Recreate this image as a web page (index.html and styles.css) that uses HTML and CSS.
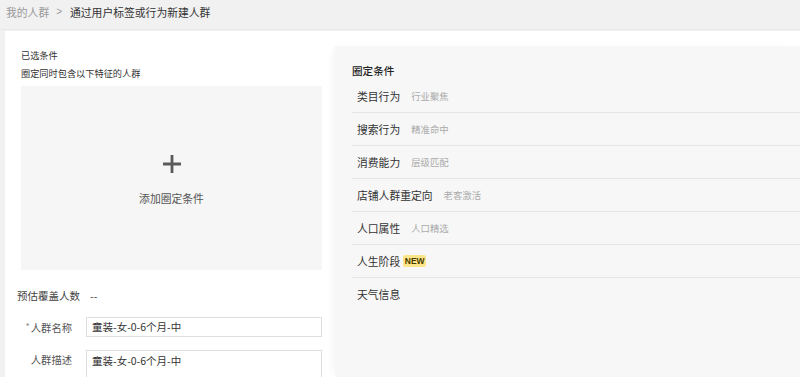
FILE: index.html
```html
<!DOCTYPE html>
<html lang="zh-CN">
<head>
<meta charset="utf-8">
<title>通过用户标签或行为新建人群</title>
<link rel="stylesheet" href="styles.css">
</head>
<body>
<div class="crumbs">
  <span class="crumb-link">我的人群</span>
  <span class="crumb-sep">&gt;</span>
  <span class="crumb-cur">通过用户标签或行为新建人群</span>
</div>
<div class="card">
  <div class="left">
    <div class="sel-title">已选条件</div>
    <div class="sel-sub">圈定同时包含以下特征的人群</div>
    <div class="drop">
      <svg class="plus" width="18" height="18" viewBox="0 0 18 18"><path d="M9 0v18M0 9h18" stroke="#5a5a5a" stroke-width="2.8" fill="none"/></svg>
      <div class="drop-text">添加圈定条件</div>
    </div>
    <div class="estimate">
      <span class="est-label">预估覆盖人数</span>
      <span class="est-val">--</span>
    </div>
    <div class="field">
      <label class="f-label"><span class="req">*</span>人群名称</label>
      <div class="input">童装-女-0-6个月-中</div>
    </div>
    <div class="field">
      <label class="f-label">人群描述</label>
      <div class="input textarea">童装-女-0-6个月-中</div>
    </div>
  </div>
  <div class="panel">
    <div class="panel-title">圈定条件</div>
    <div class="row"><span class="r-label">类目行为</span><span class="r-sub">行业聚焦</span></div>
    <div class="row"><span class="r-label">搜索行为</span><span class="r-sub">精准命中</span></div>
    <div class="row"><span class="r-label">消费能力</span><span class="r-sub">层级匹配</span></div>
    <div class="row"><span class="r-label">店铺人群重定向</span><span class="r-sub">老客激活</span></div>
    <div class="row"><span class="r-label">人口属性</span><span class="r-sub">人口精选</span></div>
    <div class="row"><span class="r-label">人生阶段</span><span class="badge">NEW</span></div>
    <div class="row last"><span class="r-label">天气信息</span></div>
  </div>
</div>
</body>
</html>
```

FILE: styles.css
```css
html, body {
  margin: 0;
  padding: 0;
  height: 100%;
  overflow: hidden;
}
body {
  background: #f1f1f1;
  font-family: "Noto Sans CJK SC", "Noto Sans", sans-serif;
  color: #333;
}
.crumbs {
  height: 30px;
  display: flex;
  align-items: center;
  padding-left: 6px;
  padding-bottom: 6px;
  font-size: 10.8px;
  border-bottom: 1px solid #e9e9e9;
  box-sizing: border-box;
}
.crumb-link { color: #999; }
.crumb-sep { color: #999; margin: 0 8px 0 7px; font-family: "Liberation Sans", sans-serif; font-size: 10px; }
.crumb-cur { color: #333; }

.card {
  margin-left: 5px;
  margin-top: 1px;
  background: #fff;
  display: flex;
  height: calc(100% - 31px);
}
.left {
  width: 301px;
  padding: 15px 0 0 16px;
  flex: none;
}
.sel-title, .sel-sub {
  font-size: 9.2px;
  line-height: 18px;
  color: #333;
}
.drop {
  margin-top: 4px;
  height: 184px;
  background: #f6f6f6;
  display: flex;
  flex-direction: column;
  align-items: center;
  justify-content: center;
  padding-top: 4px;
  box-sizing: border-box;
}
.plus { display: block; }
.drop-text {
  margin-top: 18px;
  font-size: 10.8px;
  line-height: 14px;
  color: #555;
}
.estimate {
  margin-top: 15px;
  margin-left: -4px;
  height: 20px;
  display: flex;
  align-items: center;
  font-size: 10.5px;
  color: #444;
}
.est-val { margin-left: 10px; color: #444; }
.field {
  display: flex;
  align-items: flex-start;
  margin-top: 12px;
}
.f-label {
  width: 51px;
  flex: none;
  text-align: right;
  font-size: 10.3px;
  line-height: 20px;
  color: #555;
}
.req { color: #888; font-size: 9px; vertical-align: 2px; margin-right: 1px; }
.input {
  margin-left: 14px;
  flex: 1;
  height: 20px;
  border: 1px solid #dedede;
  box-sizing: border-box;
  font-size: 10.5px;
  line-height: 18px;
  padding-left: 5px;
  color: #333;
}
.textarea {
  height: 40px;
  padding-top: 1px;
}

.panel {
  flex: 1;
  margin: 15px 0 0 13px;
  background: #f7f7f7;
  padding: 16px 0 0 17px;
  box-shadow: -5px 0 8px -4px rgba(0, 0, 0, 0.06);
}
.panel-title {
  font-size: 10.6px;
  line-height: 18px;
  color: #222;
  font-weight: 500;
}
.row {
  height: 33px;
  box-sizing: border-box;
  border-bottom: 1px solid #e4e4e4;
  display: flex;
  align-items: center;
  padding-left: 5px;
  padding-bottom: 1px;
}
.row.last { border-bottom: none; }
.r-label {
  font-size: 10.8px;
  color: #333;
}
.r-sub {
  margin-left: 11px;
  font-size: 9.4px;
  color: #aaa;
}
.badge {
  margin-left: 3px;
  width: 23px;
  height: 12px;
  background: #fde68a;
  border-radius: 2px;
  font-family: "Liberation Sans", sans-serif;
  font-weight: bold;
  font-size: 8.5px;
  line-height: 12px;
  text-align: center;
  color: #4a3b00;
}
```
